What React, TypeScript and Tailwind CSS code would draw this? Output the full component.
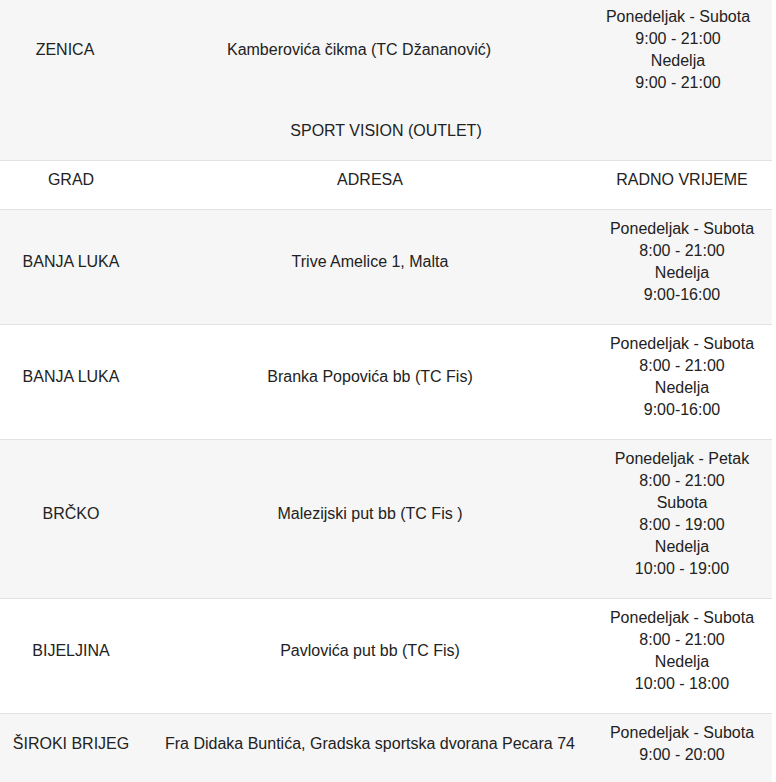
import React from 'react';

interface Store {
    city: string;
    address: string;
    hours: string[];
}

const outletStores: Store[] = [
    {
        city: 'BANJA LUKA',
        address: 'Trive Amelice 1, Malta',
        hours: ['Ponedeljak - Subota', '8:00 - 21:00', 'Nedelja', '9:00-16:00'],
    },
    {
        city: 'BANJA LUKA',
        address: 'Branka Popovića bb (TC Fis)',
        hours: ['Ponedeljak - Subota', '8:00 - 21:00', 'Nedelja', '9:00-16:00'],
    },
    {
        city: 'BRČKO',
        address: 'Malezijski put bb (TC Fis )',
        hours: ['Ponedeljak - Petak', '8:00 - 21:00', 'Subota', '8:00 - 19:00', 'Nedelja', '10:00 - 19:00'],
    },
    {
        city: 'BIJELJINA',
        address: 'Pavlovića put bb (TC Fis)',
        hours: ['Ponedeljak - Subota', '8:00 - 21:00', 'Nedelja', '10:00 - 18:00'],
    },
    {
        city: 'ŠIROKI BRIJEG',
        address: 'Fra Didaka Buntića, Gradska sportska dvorana Pecara 74',
        hours: ['Ponedeljak - Subota', '9:00 - 20:00'],
    },
];

const rowCols = 'grid grid-cols-[142px_456px_174px] items-center text-center';

export default function App() {
    return (
        <div className="w-[772px] bg-white text-[16px] leading-[22px] text-[#222] font-['Liberation_Sans',Arial,sans-serif]">
            {/* Tail of the previous table */}
            <div className="grid grid-cols-[130px_458px_184px] items-center text-center bg-[#f6f6f6] pt-[6px] pb-[18px]">
                <div>ZENICA</div>
                <div>Kamberovića čikma (TC Džananović)</div>
                <div className="pr-[4px]">
                    <div>Ponedeljak - Subota</div>
                    <div>9:00 - 21:00</div>
                    <div>Nedelja</div>
                    <div>9:00 - 21:00</div>
                </div>
            </div>

            {/* Outlet table */}
            <div className="bg-[#f6f6f6] pt-[8px] pb-[18px] text-center">SPORT VISION (OUTLET)</div>
            <div className={`${rowCols} bg-white border-t border-[#e2e2e2] pt-[8px] pb-[18px]`}>
                <div>GRAD</div>
                <div>ADRESA</div>
                <div className="pr-[6px]">RADNO VRIJEME</div>
            </div>
            {outletStores.map((store, index) => (
                <div
                    key={index}
                    className={`${rowCols} border-t border-[#e2e2e2] pt-[8px] pb-[18px] ${index % 2 === 0 ? 'bg-[#f6f6f6]' : 'bg-white'}`}
                >
                    <div>{store.city}</div>
                    <div>{store.address}</div>
                    <div className="pr-[6px]">
                        {store.hours.map((line, i) => (
                            <div key={i}>{line}</div>
                        ))}
                    </div>
                </div>
            ))}
        </div>
    );
}
